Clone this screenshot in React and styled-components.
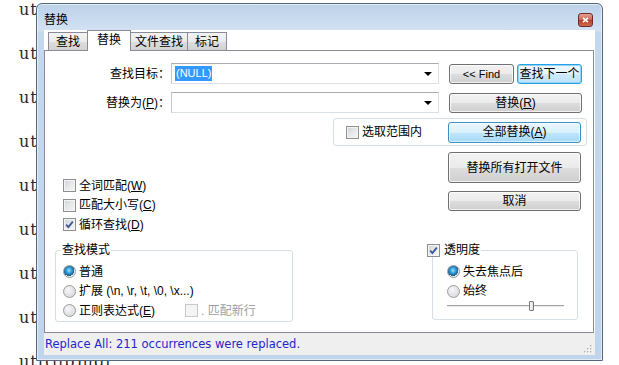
import React from "react";
import styled, { createGlobalStyle, css } from "styled-components";

const UI_FONT = `"Liberation Sans", "Noto Sans CJK SC", sans-serif`;

const GlobalStyle = createGlobalStyle`
  html, body {
    margin: 0;
    padding: 0;
    background: #fff;
  }
  body {
    width: 619px;
    height: 365px;
    overflow: hidden;
  }
`;

const Desktop = styled.div`
  position: relative;
  width: 619px;
  height: 365px;
  overflow: hidden;
  background: #fff;
`;

const EditorLines = styled.div`
  display: flex;
  flex-direction: column;
  margin-top: -12px;
  padding-left: 19px;
  font-family: "DejaVu Serif", serif;
  font-size: 16px;
  letter-spacing: 1px;
  line-height: 44px;
  color: #2a2a2a;
  white-space: pre;
`;

const Dialog = styled.div`
  position: absolute;
  left: 36px;
  top: 3px;
  width: 567px;
  height: 358px;
  box-sizing: border-box;
  display: flex;
  flex-direction: column;
  padding: 0 7px 5px 7px;
  border: 1px solid #56687e;
  border-radius: 6px 6px 0 0;
  background: linear-gradient(180deg, #bcd1ea 0px, #d3e2f3 27px, #c4d8ee 28px, #c0d5ec 100%);
  box-shadow: inset 0 0 0 1px rgba(255, 255, 255, 0.55);
  font-family: ${UI_FONT};
  font-size: 12px;
  color: #000;
`;

const TitleBar = styled.div`
  height: 26px;
  box-sizing: border-box;
  display: flex;
  align-items: center;
  padding: 9px 2px 3px 0;
`;

const Title = styled.div`
  font-size: 12px;
  line-height: 14px;
  color: #000;
`;

const CloseButton = styled.div`
  margin-left: auto;
  width: 15px;
  height: 14px;
  box-sizing: border-box;
  border: 1px solid #6e2c22;
  border-radius: 3px;
  background: linear-gradient(180deg, #e4a297 0%, #cd6455 48%, #b83e2e 52%, #cf6a52 100%);
  display: flex;
  align-items: center;
  justify-content: center;
`;

const Client = styled.div`
  flex: 1;
  display: flex;
  flex-direction: column;
  background: #fff;
  min-height: 0;
`;

const TabStrip = styled.div`
  height: 20px;
  display: flex;
  align-items: flex-end;
  padding-left: 4px;
  position: relative;
  z-index: 1;
`;

const Tab = styled.div`
  min-width: 40px;
  box-sizing: border-box;
  height: 18px;
  padding: 0 4px;
  display: flex;
  align-items: center;
  justify-content: center;
  border: 1px solid #898c95;
  border-bottom: none;
  margin-right: -1px;
  line-height: 14px;
  background: linear-gradient(180deg, #f3f3f3 0%, #ebebeb 50%, #dedede 51%, #d2d2d2 100%);
  ${(p) =>
    p.$active &&
    css`
      min-width: 44px;
      height: 21px;
      margin-bottom: -1px;
      background: #fff;
      position: relative;
      z-index: 2;
      padding-bottom: 2px;
    `}
`;

const Panel = styled.div`
  flex: 1;
  display: flex;
  flex-direction: column;
  border: 1px solid #898c95;
  margin-right: 1px;
  background: #fff;
  padding-top: 12px;
  min-height: 0;
`;

const Row = styled.div`
  display: flex;
  align-items: center;
  height: 21px;
  margin-top: ${(p) => p.$mt || 0}px;
`;

const FieldLabel = styled.div`
  width: 125px;
  text-align: right;
  line-height: 14px;
  white-space: nowrap;
`;

const Combo = styled.div`
  width: 268px;
  height: 21px;
  margin-left: 1px;
  box-sizing: border-box;
  display: flex;
  align-items: center;
  padding: 0 4px 0 3px;
  border: 1px solid #dbdfe6;
  border-top-color: #abadb3;
  border-left-color: #c5c8ce;
  background: #fff;
`;

const Selection = styled.span`
  background: #3399ff;
  color: #fff;
  font-family: "Liberation Sans", sans-serif;
  font-size: 11px;
  line-height: 15px;
  padding: 0 1px;
`;

const DropArrow = styled.div`
  margin-left: auto;
  margin-right: 2px;
  width: 0;
  height: 0;
  border-left: 4px solid transparent;
  border-right: 4px solid transparent;
  border-top: 4px solid #000;
`;

const ButtonGroup = styled.div`
  display: flex;
  gap: 3px;
  margin-left: 10px;
`;

const Button = styled.div`
  width: ${(p) => p.$w || 133}px;
  height: ${(p) => p.$h || 21}px;
  box-sizing: border-box;
  display: flex;
  align-items: center;
  justify-content: center;
  border: 1px solid #707070;
  border-radius: 3px;
  background: linear-gradient(180deg, #f2f2f2 0%, #ebebeb 50%, #dddddd 51%, #cfcfcf 100%);
  box-shadow: inset 0 0 0 1px rgba(255, 255, 255, 0.75);
  line-height: 14px;
  white-space: nowrap;
  font-size: 12px;
  ${(p) =>
    p.$latin &&
    css`
      font-family: "Liberation Sans", sans-serif;
      font-size: 11px;
    `}
  ${(p) =>
    p.$hot &&
    css`
      border-color: #3c8fc4;
      background: linear-gradient(180deg, #eaf6fd 0%, #d9f0fc 50%, #bee6fd 51%, #a7d9f5 100%);
      box-shadow: inset 0 0 0 1px rgba(255, 255, 255, 0.6);
    `}
  ${(p) =>
    p.$focus &&
    css`
      border-color: #2ba0e6;
      background: linear-gradient(180deg, #f1f9fe 0%, #e3f3fd 50%, #cfebfb 51%, #bfe3f8 100%);
      box-shadow: inset 0 0 0 1px #8fd3f7;
    `}
`;

const RangeBox = styled.div`
  margin: 5px 0 0 288px;
  width: 254px;
  height: 28px;
  box-sizing: border-box;
  display: flex;
  align-items: center;
  padding: 0 5px 0 12px;
  border: 1px solid #d5dfe5;
  border-radius: 3px;
  ${Button} {
    margin-left: auto;
  }
`;

const Middle = styled.div`
  display: flex;
  margin-top: 6px;
  height: 82.5px;
`;

const Options = styled.div`
  width: 403px;
  box-sizing: border-box;
  padding: 24px 0 0 18px;
  display: flex;
  flex-direction: column;
`;

const RightButtons = styled.div`
  display: flex;
  flex-direction: column;
  gap: 8px;
`;

const CheckRow = styled.div`
  display: flex;
  align-items: center;
  height: 19.5px;
  gap: 3px;
  line-height: 14px;
  white-space: nowrap;
  color: ${(p) => (p.$disabled ? "#a0a0a0" : "#000")};
  margin-left: ${(p) => p.$ml || 0}px;
`;

const Box = styled.div`
  width: 13px;
  height: 13px;
  box-sizing: border-box;
  flex: none;
  border: 1px solid ${(p) => (p.$disabled ? "#c8c8c8" : "#8e8f8f")};
  background: ${(p) =>
    p.$disabled
      ? "#f4f4f4"
      : "linear-gradient(135deg, #d0d3d8 0%, #e6e7ea 50%, #f7f7f7 100%)"};
  box-shadow: inset 0 0 0 1px #f4f4f4;
  display: flex;
  align-items: center;
  justify-content: center;
`;

const RadioDot = styled.div`
  width: 13px;
  height: 13px;
  box-sizing: border-box;
  flex: none;
  border-radius: 50%;
  border: 1px solid #9a9c9e;
  background: ${(p) =>
    p.$on
      ? "radial-gradient(circle at 45% 40%, #9ee0fb 0, #3aa0d8 30%, #135f91 60%, #e9eaec 62%, #f7f7f7 100%)"
      : "radial-gradient(circle at 40% 35%, #f7f7f7 0, #dcdde0 70%, #cfd1d4 100%)"};
`;

const Bottom = styled.div`
  display: flex;
  margin-top: 8.5px;
  align-items: flex-start;
`;

const Group = styled.fieldset`
  margin: 0 0 0 ${(p) => p.$ml}px;
  width: ${(p) => p.$w}px;
  box-sizing: border-box;
  border: 1px solid #d5dfe5;
  border-radius: 3px;
  padding: 0 0 ${(p) => p.$pb || 0}px 5px;
  min-width: 0;
`;

const GroupTitle = styled.legend`
  padding: 0 1px;
  margin-left: ${(p) => p.$ml || 0}px;
  line-height: 14px;
  font-size: 12px;
  display: flex;
  align-items: center;
  gap: 4px;
`;

const GroupBody = styled.div`
  display: flex;
  flex-direction: column;
  padding-top: 5px;
  margin-left: ${(p) => p.$ml || 0}px;
`;

const RadioRow = styled.div`
  display: flex;
  align-items: center;
  height: 19.5px;
  line-height: 14px;
  white-space: nowrap;
  gap: 3px;
`;

const SliderRow = styled.div`
  height: 10px;
  width: 117px;
  display: flex;
  align-items: center;
  position: relative;
`;

const SliderTrack = styled.div`
  width: 100%;
  height: 2px;
  background: linear-gradient(180deg, #a3a3a3 50%, #ececec 50%);
`;

const SliderThumb = styled.div`
  position: absolute;
  top: 0;
  width: 5px;
  height: 10px;
  box-sizing: border-box;
  border: 1px solid #7a7a7a;
  border-radius: 1px;
  background: linear-gradient(90deg, #fbfbfb, #dcdcdc);
`;

const StatusBar = styled.div`
  height: 22px;
  display: flex;
  align-items: center;
  padding-left: 1px;
  background: #efefef;
  position: relative;
`;

const StatusText = styled.div`
  font-family: "DejaVu Sans", sans-serif;
  font-size: 11.5px;
  line-height: 14px;
  color: #2424cc;
  white-space: nowrap;
`;

const Grip = styled.svg`
  margin-left: auto;
  margin-right: 2px;
  align-self: flex-end;
  margin-bottom: 1px;
`;

const U = styled.span`
  text-decoration: underline;
  text-underline-offset: 1px;
`;

const Check = ({ checked, disabled }) => (
  <Box $disabled={disabled}>
    {checked && (
      <svg width="9" height="9" viewBox="0 0 9 9">
        <path d="M1.2 4.6 L3.4 7 L7.8 1.6" fill="none" stroke="#3c579a" strokeWidth="1.8" />
      </svg>
    )}
  </Box>
);

export default function App() {
  const lines = ["ut", "ut", "ut", "ut", "ut", "ut", "ut", "ut", "utf(lib)hdl"];
  const sliderValue = 0.705;

  return (
    <>
      <GlobalStyle />
      <Desktop>
        <EditorLines>
          {lines.map((l, i) => (
            <div key={i}>{l}</div>
          ))}
        </EditorLines>

        <Dialog>
          <TitleBar>
            <Title>替换</Title>
            <CloseButton>
              <svg width="7" height="6" viewBox="0 0 7 6">
                <path d="M1 0.8 L6 5.2 M6 0.8 L1 5.2" stroke="#fff" strokeWidth="1.6" />
              </svg>
            </CloseButton>
          </TitleBar>

          <Client>
            <TabStrip>
              <Tab>查找</Tab>
              <Tab $active>替换</Tab>
              <Tab>文件查找</Tab>
              <Tab>标记</Tab>
            </TabStrip>

            <Panel>
              <Row>
                <FieldLabel>查找目标：</FieldLabel>
                <Combo>
                  <Selection>(NULL)</Selection>
                  <DropArrow />
                </Combo>
                <ButtonGroup>
                  <Button $w={65} $h={20} $latin>&lt;&lt; Find</Button>
                  <Button $w={65} $h={20} $focus>查找下一个</Button>
                </ButtonGroup>
              </Row>
              <Row $mt={8}>
                <FieldLabel>
                  替换为(<U>P</U>)：
                </FieldLabel>
                <Combo>
                  <DropArrow />
                </Combo>
                <ButtonGroup>
                  <Button $h={20}>
                    <span>替换(<U>R</U>)</span>
                  </Button>
                </ButtonGroup>
              </Row>

              <RangeBox>
                <CheckRow>
                  <Check />
                  <span>选取范围内</span>
                </CheckRow>
                <Button $hot>
                  <span>全部替换(<U>A</U>)</span>
                </Button>
              </RangeBox>

              <Middle>
                <Options>
                  <CheckRow>
                    <Check />
                    <span>全词匹配(<U>W</U>)</span>
                  </CheckRow>
                  <CheckRow>
                    <Check />
                    <span>匹配大小写(<U>C</U>)</span>
                  </CheckRow>
                  <CheckRow>
                    <Check checked />
                    <span>循环查找(<U>D</U>)</span>
                  </CheckRow>
                </Options>
                <RightButtons>
                  <Button $h={31}>替换所有打开文件</Button>
                  <Button $h={20}>取消</Button>
                </RightButtons>
              </Middle>

              <Bottom>
                <Group $ml={10} $w={238}>
                  <GroupTitle>查找模式</GroupTitle>
                  <GroupBody $ml={2}>
                    <RadioRow>
                      <RadioDot $on />
                      <span>普通</span>
                    </RadioRow>
                    <RadioRow>
                      <RadioDot />
                      <span>{"扩展 (\\n, \\r, \\t, \\0, \\x...)"}</span>
                    </RadioRow>
                    <RadioRow>
                      <RadioDot />
                      <span>正则表达式(<U>E</U>)</span>
                      <CheckRow $disabled $ml={27}>
                        <Check disabled />
                        <span>. 匹配新行</span>
                      </CheckRow>
                    </RadioRow>
                  </GroupBody>
                </Group>

                <Group $ml={139} $w={146} $pb={8}>
                  <GroupTitle $ml={-12}>
                    <Check checked />
                    <span>透明度</span>
                  </GroupTitle>
                  <GroupBody $ml={9}>
                    <RadioRow>
                      <RadioDot $on />
                      <span>失去焦点后</span>
                    </RadioRow>
                    <RadioRow>
                      <RadioDot />
                      <span>始终</span>
                    </RadioRow>
                    <SliderRow>
                      <SliderTrack />
                      <SliderThumb style={{ left: `${sliderValue * 117}px` }} />
                    </SliderRow>
                  </GroupBody>
                </Group>
              </Bottom>
            </Panel>

            <StatusBar>
              <StatusText>Replace All: 211 occurrences were replaced.</StatusText>
              <Grip width="10" height="10" viewBox="0 0 10 10">
                {[
                  [8, 2], [8, 5], [8, 8], [5, 5], [5, 8], [2, 8],
                ].map(([x, y], i) => (
                  <g key={i}>
                    <rect x={x} y={y} width="1.5" height="1.5" fill="#fff" />
                    <rect x={x - 1} y={y - 1} width="1.5" height="1.5" fill="#b8b8b8" />
                  </g>
                ))}
              </Grip>
            </StatusBar>
          </Client>
        </Dialog>
      </Desktop>
    </>
  );
}
